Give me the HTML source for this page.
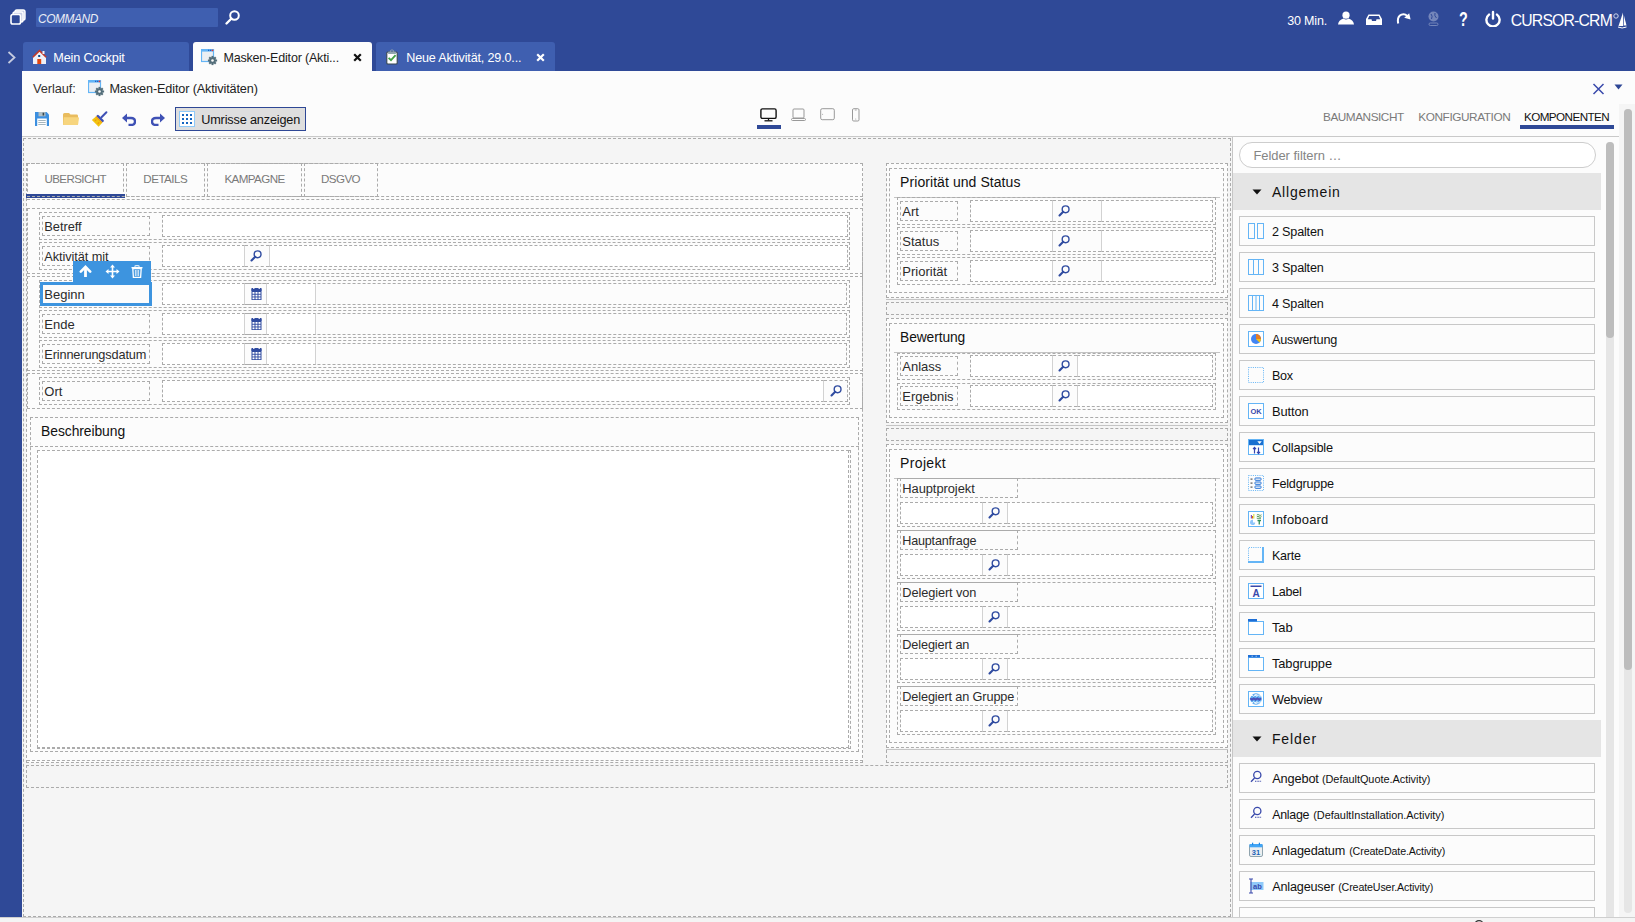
<!DOCTYPE html>
<html><head><meta charset="utf-8"><style>
html,body{margin:0;padding:0;width:1635px;height:922px;overflow:hidden;background:#fcfcfc;font-family:"Liberation Sans", sans-serif;}
.a{position:absolute;box-sizing:border-box;}
.t{white-space:pre;}
</style></head><body>
<div class="a" style="left:0px;top:0px;width:1635px;height:71px;background:#2f4997"></div>
<div class="a" style="left:0px;top:71px;width:22px;height:846px;background:#2f4997"></div>
<div class="a" style="left:22px;top:71px;width:1613px;height:846px;background:#fcfcfc"></div>
<div class="a" style="left:0px;top:917px;width:1635px;height:5px;background:#f4f4f4;border-top:1px solid #cfcfcf"></div>
<svg class="a" style="left:8px;top:7px" width="20" height="20" viewBox="0 0 20 20"><rect x="7" y="3" width="10" height="10" rx="1.8" fill="#c8cee6" stroke="#fff" stroke-width="1.4"/><rect x="5" y="5" width="10" height="10" rx="1.8" fill="#c8cee6" stroke="#fff" stroke-width="1.4"/><rect x="3" y="7.5" width="9.5" height="9.5" rx="1.8" fill="#2f4997" stroke="#fff" stroke-width="1.6"/></svg>
<div class="a" style="left:36px;top:8px;width:182px;height:19px;background:#3f5fb0;border-radius:1px"></div>
<div class="a t" style="left:38px;top:12.00px;font-size:11.92px;line-height:14px;color:#e9ecf5;letter-spacing:-0.416px;font-style:italic;">COMMAND</div>
<svg class="a" style="left:224px;top:9px" width="18" height="18" viewBox="0 0 18 18"><circle cx="10.5" cy="6.5" r="4.3" fill="none" stroke="#fff" stroke-width="2"/><line x1="7.5" y1="9.5" x2="2.5" y2="14.5" stroke="#fff" stroke-width="2.4" stroke-linecap="round"/></svg>
<svg class="a" style="left:6px;top:50px" width="11" height="15" viewBox="0 0 11 15"><polyline points="2.5,2 8.5,7.5 2.5,13" fill="none" stroke="#c5cbe0" stroke-width="1.8"/></svg>
<div class="a" style="left:23px;top:42px;width:166px;height:29px;background:#3f5fb0;border-radius:3px 3px 0 0"></div>
<div class="a" style="left:193px;top:42px;width:179px;height:29px;background:#fcfcfc;border-radius:3px 3px 0 0"></div>
<div class="a" style="left:376px;top:42px;width:179px;height:29px;background:#3f5fb0;border-radius:3px 3px 0 0"></div>
<svg class="a" style="left:32px;top:49px" width="15" height="15" viewBox="0 0 15 15"><rect x="1" y="7" width="13" height="8" fill="#eef0f8"/><polygon points="7.5,1.5 13.5,7.5 1.5,7.5" fill="#eef0f8"/><polyline points="0.8,8.2 7.5,1.6 14.2,8.2" fill="none" stroke="#c0392b" stroke-width="1.6"/><rect x="10.5" y="2" width="2" height="3" fill="#eef0f8"/><rect x="5.3" y="10" width="3.9" height="5" fill="#e2450f"/><rect x="6.2" y="6" width="2" height="2" fill="#0b4a8f"/></svg>
<div class="a t" style="left:53.3px;top:51.00px;font-size:12.68px;line-height:14px;color:#ffffff;letter-spacing:-0.150px;">Mein Cockpit</div>
<svg class="a" style="left:201px;top:49px" width="17" height="17" viewBox="0 0 17 17"><rect x="0.5" y="0.5" width="12" height="12" fill="#eceff3" stroke="#64b5f6" stroke-width="1.2"/><rect x="0" y="0" width="13" height="2.6" fill="#64b5f6"/><rect x="7" y="0.7" width="1.3" height="1.3" fill="#1e63c8"/><rect x="9" y="0.7" width="1.3" height="1.3" fill="#1e63c8"/><circle cx="11.5" cy="1.3" r="0.9" fill="#e53935"/><g transform="translate(11.5,11.5)"><circle r="3.2" fill="#546e7a"/><g fill="#546e7a"><rect x="-1" y="-4.6" width="2" height="9.2"/><rect x="-4.6" y="-1" width="9.2" height="2"/><rect x="-1" y="-4.6" width="2" height="9.2" transform="rotate(45)"/><rect x="-1" y="-4.6" width="2" height="9.2" transform="rotate(-45)"/></g><circle r="1.3" fill="#fcfcfc"/></g></svg>
<div class="a t" style="left:223.4px;top:51.00px;font-size:12.54px;line-height:14px;color:#1d1d1d;letter-spacing:-0.193px;">Masken-Editor (Akti...</div>
<svg class="a" style="left:353px;top:53px" width="9" height="9" viewBox="0 0 9 9"><path d="M1.2,1.2 L7.8,7.8 M7.8,1.2 L1.2,7.8" stroke="#111" stroke-width="2.2"/></svg>
<svg class="a" style="left:386px;top:49px" width="12" height="16" viewBox="0 0 12 16"><rect x="0.8" y="3" width="10.4" height="12" rx="1" fill="#fff" stroke="#37474f" stroke-width="1.1"/><rect x="2" y="2.6" width="8" height="2.4" rx="0.8" fill="#90a4ae"/><rect x="4.5" y="1" width="3" height="2.5" rx="1" fill="none" stroke="#90a4ae" stroke-width="1"/><polyline points="2.6,8.8 5,11.2 9.6,6.2" fill="none" stroke="#43a047" stroke-width="1.8"/></svg>
<div class="a t" style="left:406.3px;top:51.00px;font-size:12.58px;line-height:14px;color:#ffffff;letter-spacing:-0.168px;">Neue Aktivität, 29.0...</div>
<svg class="a" style="left:536px;top:53px" width="9" height="9" viewBox="0 0 9 9"><path d="M1.2,1.2 L7.8,7.8 M7.8,1.2 L1.2,7.8" stroke="#fff" stroke-width="2.2"/></svg>
<div class="a t" style="left:1287.3px;top:14.00px;font-size:12.54px;line-height:14px;color:#ffffff;letter-spacing:-0.206px;">30 Min.</div>
<svg class="a" style="left:1338px;top:11px" width="16" height="14" viewBox="0 0 16 14"><circle cx="8" cy="4.2" r="3.6" fill="#fff"/><path d="M5.5,7.5 Q8,9.5 10.5,7.5 Q15.5,9 16,13.5 L0,13.5 Q0.5,9 5.5,7.5Z" fill="#fff"/></svg>
<svg class="a" style="left:1366px;top:14px" width="16" height="11" viewBox="0 0 16 11"><path d="M2.5,0.5 L13.5,0.5 L16,5 L16,11 L0,11 L0,5 Z" fill="#fff"/><path d="M3.2,2 L12.8,2 L14.2,5.2 L10.5,5.2 L10,7 L6,7 L5.5,5.2 L1.8,5.2 Z" fill="#2e4795"/></svg>
<svg class="a" style="left:1396px;top:11px" width="16" height="14" viewBox="0 0 16 14"><path d="M2.2,12.5 Q0.8,5.5 5.5,3.6 Q8.8,2.4 11.2,5" fill="none" stroke="#fff" stroke-width="2"/><polygon points="8.2,6.8 14.6,8.6 13.2,2.2" fill="#fff"/></svg>
<svg class="a" style="left:1427px;top:11px" width="13" height="15" viewBox="0 0 13 15"><g opacity="0.45"><circle cx="6.5" cy="5.5" r="5" fill="#c9d0e6"/><path d="M4,3 Q6,5 4.5,8 M8,2 Q7,5 9.5,7" stroke="#2e4795" stroke-width="1" fill="none"/><rect x="2" y="12" width="9" height="2.5" rx="1.2" fill="none" stroke="#c9d0e6" stroke-width="1"/></g></svg>
<div class="a t" style="left:1458.5px;top:7.00px;font-size:21.00px;line-height:23px;color:#ffffff;letter-spacing:0.000px;font-weight:700;transform:scaleX(0.68);transform-origin:0 0;">?</div>
<svg class="a" style="left:1484px;top:10px" width="18" height="17" viewBox="0 0 18 17"><path d="M5,4.6 A6.6,6.6 0 1 0 13,4.6" fill="none" stroke="#fff" stroke-width="2.4" stroke-linecap="round"/><line x1="9" y1="2" x2="9" y2="8.5" stroke="#fff" stroke-width="2.4" stroke-linecap="round"/></svg>
<div class="a t" style="left:1510.7px;top:12.00px;font-size:15.75px;line-height:17px;color:#ffffff;letter-spacing:-0.805px;">CURSOR-CRM</div>
<svg class="a" style="left:1613px;top:13px" width="6" height="6" viewBox="0 0 6 6"><circle cx="3" cy="3" r="2.2" fill="none" stroke="#cfd6ea" stroke-width="1"/></svg>
<svg class="a" style="left:1618px;top:12px" width="9" height="17" viewBox="0 0 9 17"><path d="M5,0.5 L5.2,14 L0.5,14 Z" fill="#fff"/><path d="M5.8,3 L8.5,13.5 L5.8,13.5 Z" fill="#fff"/><path d="M0,15 Q4,17 8.5,15" stroke="#fff" stroke-width="1" fill="none"/></svg>
<div class="a t" style="left:33px;top:81.00px;font-size:12.81px;line-height:15px;color:#333;letter-spacing:-0.080px;">Verlauf:</div>
<svg class="a" style="left:88px;top:80px" width="17" height="17" viewBox="0 0 17 17"><rect x="0.5" y="0.5" width="12" height="12" fill="#eceff3" stroke="#64b5f6" stroke-width="1.2"/><rect x="0" y="0" width="13" height="2.6" fill="#64b5f6"/><rect x="7" y="0.7" width="1.3" height="1.3" fill="#1e63c8"/><rect x="9" y="0.7" width="1.3" height="1.3" fill="#1e63c8"/><circle cx="11.5" cy="1.3" r="0.9" fill="#e53935"/><g transform="translate(11.5,11.5)"><circle r="3.2" fill="#546e7a"/><g fill="#546e7a"><rect x="-1" y="-4.6" width="2" height="9.2"/><rect x="-4.6" y="-1" width="9.2" height="2"/><rect x="-1" y="-4.6" width="2" height="9.2" transform="rotate(45)"/><rect x="-1" y="-4.6" width="2" height="9.2" transform="rotate(-45)"/></g><circle r="1.3" fill="#fcfcfc"/></g></svg>
<div class="a t" style="left:109.4px;top:82.00px;font-size:12.68px;line-height:14px;color:#222;letter-spacing:-0.140px;">Masken-Editor (Aktivitäten)</div>
<svg class="a" style="left:1592px;top:83px" width="13" height="12" viewBox="0 0 13 12"><path d="M1.5,1 L11.5,11 M11.5,1 L1.5,11" stroke="#3949ab" stroke-width="1.5"/></svg>
<svg class="a" style="left:1614px;top:84px" width="9" height="6" viewBox="0 0 9 6"><polygon points="0.5,0.5 8.5,0.5 4.5,5.5" fill="#2e4795"/></svg>
<svg class="a" style="left:35px;top:112px" width="14" height="14" viewBox="0 0 14 14"><path d="M0,0 L11.5,0 L14,2.5 L14,14 L0,14Z" fill="#3b8fe0"/><rect x="3.5" y="0" width="7" height="4.3" fill="#b0bec5"/><rect x="7.6" y="0.7" width="1.6" height="2.8" fill="#37474f"/><rect x="2.2" y="6.5" width="9.6" height="7.5" fill="#fff"/><rect x="3.3" y="8" width="7.4" height="0.8" fill="#90a4ae"/><rect x="3.3" y="10" width="7.4" height="0.8" fill="#90a4ae"/><rect x="3.3" y="12" width="7.4" height="0.8" fill="#90a4ae"/></svg>
<svg class="a" style="left:63px;top:113px" width="17" height="12" viewBox="0 0 17 12"><path d="M0,1.5 Q0,0 1.5,0 L6,0 L7.5,1.5 L14,1.5 Q15,1.5 15,3 L15,11 Q15,12 14,12 L1,12 Q0,12 0,11Z" fill="#e9bc5e"/><path d="M0.8,4.3 L15.2,4.3 Q16,4.3 16,5 L15.2,11 Q15,12 14,12 L1,12 Q0.2,12 0.2,11 Z" fill="#f7d57e"/></svg>
<svg class="a" style="left:88px;top:108px" width="24" height="22" viewBox="0 0 24 22"><g transform="translate(12.2,10.5) rotate(45)"><rect x="-1" y="-9.8" width="2" height="9" rx="1" fill="#3f51b5"/><rect x="-4.6" y="-1.3" width="9.2" height="2.6" rx="1.2" fill="#3f51b5"/><path d="M-4.4,1.2 L4.4,1.2 L4.8,7 L-4.8,7 Z" fill="#f2c40f"/><rect x="-4.4" y="1.2" width="8.8" height="0.9" fill="#f0900f"/><rect x="-2.5" y="3.5" width="1" height="2" fill="#f0900f"/><rect x="1.5" y="3.5" width="1" height="2" fill="#f0900f"/></g></svg>
<svg class="a" style="left:122px;top:113px" width="14" height="13" viewBox="0 0 14 13"><path d="M4,5 L9,5 Q13,5 13,8.5 Q13,12 9,12 L6.5,12" fill="none" stroke="#3f51b5" stroke-width="2.4"/><polygon points="0,5 5,0.5 5,9.5" fill="#3f51b5"/></svg>
<svg class="a" style="left:151px;top:113px" width="14" height="13" viewBox="0 0 14 13"><g transform="translate(14,0) scale(-1,1)"><path d="M4,5 L9,5 Q13,5 13,8.5 Q13,12 9,12 L6.5,12" fill="none" stroke="#3f51b5" stroke-width="2.4"/><polygon points="0,5 5,0.5 5,9.5" fill="#3f51b5"/></g></svg>
<div class="a" style="left:175px;top:107px;width:131px;height:24px;background:#dedede;border:1px solid #2e4795"></div>
<svg class="a" style="left:179px;top:111px" width="16" height="16" viewBox="0 0 16 16"><rect x="0.5" y="0.5" width="15" height="15" fill="#fff" stroke="#90caf9" stroke-width="1"/><rect x="3" y="3" width="2" height="2" fill="#1565c0"/><rect x="3" y="7" width="2" height="2" fill="#1565c0"/><rect x="3" y="11" width="2" height="2" fill="#1565c0"/><rect x="7" y="3" width="2" height="2" fill="#1565c0"/><rect x="7" y="7" width="2" height="2" fill="#1565c0"/><rect x="7" y="11" width="2" height="2" fill="#1565c0"/><rect x="11" y="3" width="2" height="2" fill="#1565c0"/><rect x="11" y="7" width="2" height="2" fill="#1565c0"/><rect x="11" y="11" width="2" height="2" fill="#1565c0"/></svg>
<div class="a t" style="left:201.2px;top:113.00px;font-size:12.68px;line-height:14px;color:#111;letter-spacing:-0.156px;">Umrisse anzeigen</div>
<svg class="a" style="left:760px;top:108px" width="17" height="14" viewBox="0 0 17 14"><rect x="0.9" y="0.9" width="15.2" height="9.5" rx="1.5" fill="none" stroke="#111" stroke-width="1.4"/><line x1="8.5" y1="10.5" x2="8.5" y2="12.5" stroke="#111" stroke-width="1.3"/><line x1="4.5" y1="12.8" x2="12.5" y2="12.8" stroke="#111" stroke-width="1.3"/></svg>
<div class="a" style="left:757px;top:125px;width:24px;height:4px;background:#2f4997"></div>
<svg class="a" style="left:791px;top:108px" width="15" height="14" viewBox="0 0 15 14"><rect x="2" y="1" width="11" height="9" rx="1" fill="none" stroke="#999" stroke-width="1"/><rect x="0.5" y="10.5" width="14" height="2" rx="1" fill="none" stroke="#999" stroke-width="1"/></svg>
<svg class="a" style="left:820px;top:108px" width="15" height="13" viewBox="0 0 15 13"><rect x="0.7" y="0.7" width="13.6" height="11" rx="1.5" fill="none" stroke="#999" stroke-width="1"/><circle cx="2.6" cy="6.2" r="0.5" fill="#999"/></svg>
<svg class="a" style="left:851px;top:108px" width="9" height="14" viewBox="0 0 9 14"><rect x="1.5" y="0.7" width="6.5" height="12.3" rx="1.2" fill="none" stroke="#999" stroke-width="1"/><circle cx="4.75" cy="11" r="0.5" fill="#999"/><line x1="3.8" y1="2" x2="5.7" y2="2" stroke="#999" stroke-width="0.8"/></svg>
<div class="a t" style="left:1323px;top:110.00px;font-size:11.78px;line-height:13px;color:#7a7a7a;letter-spacing:-0.449px;">BAUMANSICHT</div>
<div class="a t" style="left:1418.3px;top:110.00px;font-size:11.81px;line-height:14px;color:#7a7a7a;letter-spacing:-0.417px;">KONFIGURATION</div>
<div class="a t" style="left:1524px;top:110.00px;font-size:11.66px;line-height:13px;color:#111;letter-spacing:-0.559px;">KOMPONENTEN</div>
<div class="a" style="left:1520px;top:125px;width:94px;height:4px;background:#2f4997"></div>
<div class="a" style="left:22px;top:136px;width:1597px;height:1px;background:#c9c9c9"></div>
<div class="a" style="left:22px;top:137px;width:1210px;height:780px;background:#f5f5f5"></div>
<div class="a" style="left:23px;top:138px;width:1208px;height:779px;border:1px dashed #ababab;"></div>
<div class="a" style="left:26px;top:163px;width:837px;height:600px;border:1px dashed #ababab;background:#fcfcfc"></div>
<div class="a" style="left:27px;top:163px;width:97px;height:34px;border:1px dashed #ababab;"></div>
<div class="a t" style="left:44.5px;top:173.00px;font-size:11.53px;line-height:12px;color:#7a7a7a;letter-spacing:-0.572px;">UBERSICHT</div>
<div class="a" style="left:126px;top:163px;width:79px;height:34px;border:1px dashed #ababab;"></div>
<div class="a t" style="left:143.3px;top:173.00px;font-size:11.58px;line-height:12px;color:#7a7a7a;letter-spacing:-0.500px;">DETAILS</div>
<div class="a" style="left:207px;top:163px;width:95px;height:34px;border:1px dashed #ababab;"></div>
<div class="a t" style="left:224.4px;top:172.00px;font-size:11.61px;line-height:13px;color:#7a7a7a;letter-spacing:-0.579px;">KAMPAGNE</div>
<div class="a" style="left:304px;top:163px;width:74px;height:34px;border:1px dashed #ababab;"></div>
<div class="a t" style="left:321px;top:172.00px;font-size:11.62px;line-height:13px;color:#7a7a7a;letter-spacing:-0.593px;">DSGVO</div>
<div class="a" style="left:26px;top:194px;width:99px;height:4px;background:#2f4997"></div>
<div class="a" style="left:27px;top:196px;width:836px;height:1px;border-top:1px dashed #ababab"></div>
<div class="a" style="left:27px;top:199px;width:836px;height:1px;border-top:1px dashed #ababab"></div>
<div class="a" style="left:27px;top:208px;width:836px;height:66px;border:1px dashed #ababab;"></div>
<div class="a" style="left:27px;top:276px;width:836px;height:95px;border:1px dashed #ababab;"></div>
<div class="a" style="left:27px;top:373px;width:836px;height:36px;border:1px dashed #ababab;"></div>
<div class="a" style="left:39px;top:212px;width:811px;height:28px;border:1px dashed #ababab;"></div>
<div class="a" style="left:42px;top:216px;width:108px;height:20px;border:1px dashed #ababab;"></div>
<div class="a t" style="left:44.3px;top:219.00px;font-size:12.87px;line-height:15px;color:#2b2b2b;letter-spacing:-0.054px;">Betreff</div>
<div class="a" style="left:162px;top:215px;width:686px;height:22px;background:#fff;border:1px dashed #ababab;"></div>
<div class="a" style="left:39px;top:242px;width:811px;height:28px;border:1px dashed #ababab;"></div>
<div class="a" style="left:42px;top:246px;width:108px;height:20px;border:1px dashed #ababab;"></div>
<div class="a t" style="left:44.3px;top:249.00px;font-size:12.78px;line-height:15px;color:#2b2b2b;letter-spacing:-0.087px;">Aktivität mit</div>
<div class="a" style="left:162px;top:245px;width:83px;height:22px;background:#fff;border:1px dashed #ababab;border-right:1px solid #d2d2d2;"></div>
<div class="a" style="left:245px;top:245px;width:24px;height:22px;border-top:1px dashed #ababab;border-bottom:1px dashed #ababab;"></div>
<svg class="a" style="left:250px;top:250px" width="12" height="12" viewBox="0 0 12 12"><circle cx="7.6" cy="4.3" r="3.4" fill="none" stroke="#2f4ba0" stroke-width="1.4"/><line x1="5.2" y1="6.8" x2="1.5" y2="10.5" stroke="#2f4ba0" stroke-width="2.1" stroke-linecap="round"/></svg>
<div class="a" style="left:269px;top:245px;width:579px;height:22px;background:#fff;border:1px dashed #ababab;border-left:1px solid #d2d2d2;"></div>
<div class="a" style="left:39px;top:280px;width:811px;height:28px;border:1px dashed #ababab;"></div>
<div class="a" style="left:40px;top:282px;width:112px;height:24px;border:3px solid #3d94df;background:#fcfcfc"></div>
<div class="a t" style="left:44.3px;top:287.00px;font-size:13.00px;line-height:15px;color:#2b2b2b;letter-spacing:0.000px;">Beginn</div>
<div class="a" style="left:162px;top:283px;width:685px;height:22px;border:1px dashed #ababab;"></div>
<div class="a" style="left:162px;top:283px;width:83px;height:22px;background:#fff;border:1px dashed #ababab;border-right:1px solid #d2d2d2;"></div>
<div class="a" style="left:245px;top:283px;width:21px;height:22px;border-top:1px dashed #ababab;border-bottom:1px dashed #ababab;"></div>
<svg class="a" style="left:251px;top:287px" width="11" height="14" viewBox="0 0 11 14"><rect x="0.5" y="2" width="10" height="11" fill="#2f4ba0"/><rect x="0.5" y="1" width="10" height="3" fill="#2f4ba0"/><rect x="1.5" y="5.0" width="2" height="1.8" fill="#fff"/><rect x="1.5" y="7.7" width="2" height="1.8" fill="#fff"/><rect x="1.5" y="10.4" width="2" height="1.8" fill="#fff"/><rect x="4.5" y="5.0" width="2" height="1.8" fill="#fff"/><rect x="4.5" y="7.7" width="2" height="1.8" fill="#fff"/><rect x="4.5" y="10.4" width="2" height="1.8" fill="#fff"/><rect x="7.5" y="5.0" width="2" height="1.8" fill="#fff"/><rect x="7.5" y="7.7" width="2" height="1.8" fill="#fff"/><rect x="7.5" y="10.4" width="2" height="1.8" fill="#fff"/><rect x="2.2" y="0" width="1.2" height="2" fill="#fff"/><rect x="7.6" y="0" width="1.2" height="2" fill="#fff"/></svg>
<div class="a" style="left:266px;top:283px;width:50px;height:22px;background:#fff;border:1px dashed #ababab;border-right:1px solid #d2d2d2;border-left:1px solid #d2d2d2;"></div>
<div class="a" style="left:39px;top:310px;width:811px;height:28px;border:1px dashed #ababab;"></div>
<div class="a" style="left:42px;top:314px;width:108px;height:20px;border:1px dashed #ababab;"></div>
<div class="a t" style="left:44.3px;top:317.00px;font-size:13.00px;line-height:15px;color:#2b2b2b;letter-spacing:0.000px;">Ende</div>
<div class="a" style="left:162px;top:313px;width:685px;height:22px;border:1px dashed #ababab;"></div>
<div class="a" style="left:162px;top:313px;width:83px;height:22px;background:#fff;border:1px dashed #ababab;border-right:1px solid #d2d2d2;"></div>
<div class="a" style="left:245px;top:313px;width:21px;height:22px;border-top:1px dashed #ababab;border-bottom:1px dashed #ababab;"></div>
<svg class="a" style="left:251px;top:317px" width="11" height="14" viewBox="0 0 11 14"><rect x="0.5" y="2" width="10" height="11" fill="#2f4ba0"/><rect x="0.5" y="1" width="10" height="3" fill="#2f4ba0"/><rect x="1.5" y="5.0" width="2" height="1.8" fill="#fff"/><rect x="1.5" y="7.7" width="2" height="1.8" fill="#fff"/><rect x="1.5" y="10.4" width="2" height="1.8" fill="#fff"/><rect x="4.5" y="5.0" width="2" height="1.8" fill="#fff"/><rect x="4.5" y="7.7" width="2" height="1.8" fill="#fff"/><rect x="4.5" y="10.4" width="2" height="1.8" fill="#fff"/><rect x="7.5" y="5.0" width="2" height="1.8" fill="#fff"/><rect x="7.5" y="7.7" width="2" height="1.8" fill="#fff"/><rect x="7.5" y="10.4" width="2" height="1.8" fill="#fff"/><rect x="2.2" y="0" width="1.2" height="2" fill="#fff"/><rect x="7.6" y="0" width="1.2" height="2" fill="#fff"/></svg>
<div class="a" style="left:266px;top:313px;width:50px;height:22px;background:#fff;border:1px dashed #ababab;border-right:1px solid #d2d2d2;border-left:1px solid #d2d2d2;"></div>
<div class="a" style="left:39px;top:340px;width:811px;height:28px;border:1px dashed #ababab;"></div>
<div class="a" style="left:42px;top:344px;width:108px;height:20px;border:1px dashed #ababab;"></div>
<div class="a t" style="left:44.3px;top:347.00px;font-size:12.74px;line-height:15px;color:#2b2b2b;letter-spacing:-0.131px;">Erinnerungsdatum</div>
<div class="a" style="left:162px;top:343px;width:685px;height:22px;border:1px dashed #ababab;"></div>
<div class="a" style="left:162px;top:343px;width:83px;height:22px;background:#fff;border:1px dashed #ababab;border-right:1px solid #d2d2d2;"></div>
<div class="a" style="left:245px;top:343px;width:21px;height:22px;border-top:1px dashed #ababab;border-bottom:1px dashed #ababab;"></div>
<svg class="a" style="left:251px;top:347px" width="11" height="14" viewBox="0 0 11 14"><rect x="0.5" y="2" width="10" height="11" fill="#2f4ba0"/><rect x="0.5" y="1" width="10" height="3" fill="#2f4ba0"/><rect x="1.5" y="5.0" width="2" height="1.8" fill="#fff"/><rect x="1.5" y="7.7" width="2" height="1.8" fill="#fff"/><rect x="1.5" y="10.4" width="2" height="1.8" fill="#fff"/><rect x="4.5" y="5.0" width="2" height="1.8" fill="#fff"/><rect x="4.5" y="7.7" width="2" height="1.8" fill="#fff"/><rect x="4.5" y="10.4" width="2" height="1.8" fill="#fff"/><rect x="7.5" y="5.0" width="2" height="1.8" fill="#fff"/><rect x="7.5" y="7.7" width="2" height="1.8" fill="#fff"/><rect x="7.5" y="10.4" width="2" height="1.8" fill="#fff"/><rect x="2.2" y="0" width="1.2" height="2" fill="#fff"/><rect x="7.6" y="0" width="1.2" height="2" fill="#fff"/></svg>
<div class="a" style="left:266px;top:343px;width:50px;height:22px;background:#fff;border:1px dashed #ababab;border-right:1px solid #d2d2d2;border-left:1px solid #d2d2d2;"></div>
<div class="a" style="left:39px;top:377px;width:811px;height:28px;border:1px dashed #ababab;"></div>
<div class="a" style="left:42px;top:381px;width:108px;height:20px;border:1px dashed #ababab;"></div>
<div class="a t" style="left:44.3px;top:384.00px;font-size:13.00px;line-height:15px;color:#2b2b2b;letter-spacing:0.000px;">Ort</div>
<div class="a" style="left:162px;top:380px;width:662px;height:22px;background:#fff;border:1px dashed #ababab;border-right:1px solid #d2d2d2;"></div>
<div class="a" style="left:824px;top:380px;width:24px;height:22px;border:1px dashed #ababab;border-left:none"></div>
<svg class="a" style="left:830px;top:385px" width="12" height="12" viewBox="0 0 12 12"><circle cx="7.6" cy="4.3" r="3.4" fill="none" stroke="#2f4ba0" stroke-width="1.4"/><line x1="5.2" y1="6.8" x2="1.5" y2="10.5" stroke="#2f4ba0" stroke-width="2.1" stroke-linecap="round"/></svg>
<div class="a" style="left:73px;top:261px;width:78px;height:22px;background:#3d94df"></div>
<svg class="a" style="left:79px;top:265px" width="13" height="13" viewBox="0 0 13 13"><polyline points="1.8,6.6 6.5,1.9 11.2,6.6" fill="none" stroke="#fff" stroke-width="2.6" stroke-linecap="round"/><line x1="6.5" y1="3" x2="6.5" y2="12" stroke="#fff" stroke-width="2.8"/></svg>
<svg class="a" style="left:105px;top:264px" width="15" height="15" viewBox="0 0 15 15"><path d="M7.5,0.5 L10,3.5 L8.3,3.5 L8.3,6.7 L11.5,6.7 L11.5,5 L14.5,7.5 L11.5,10 L11.5,8.3 L8.3,8.3 L8.3,11.5 L10,11.5 L7.5,14.5 L5,11.5 L6.7,11.5 L6.7,8.3 L3.5,8.3 L3.5,10 L0.5,7.5 L3.5,5 L3.5,6.7 L6.7,6.7 L6.7,3.5 L5,3.5 Z" fill="#fff"/></svg>
<svg class="a" style="left:131px;top:265px" width="12" height="13" viewBox="0 0 12 13"><rect x="0.5" y="2" width="11" height="1.4" fill="#fff"/><rect x="4" y="0.3" width="4" height="2" rx="0.6" fill="none" stroke="#fff" stroke-width="1"/><path d="M1.8,3.6 L10.2,3.6 L9.6,12.5 L2.4,12.5 Z" fill="none" stroke="#fff" stroke-width="1.3"/><path d="M4.4,5 L4.4,11 M6,5 L6,11 M7.6,5 L7.6,11" stroke="#fff" stroke-width="0.8"/></svg>
<div class="a" style="left:30px;top:417px;width:829px;height:335px;border:1px dashed #ababab;"></div>
<div class="a t" style="left:41.1px;top:423.00px;font-size:13.87px;line-height:16px;color:#111;letter-spacing:-0.067px;">Beschreibung</div>
<div class="a" style="left:30px;top:446px;width:829px;height:1px;border-top:1px dashed #ababab"></div>
<div class="a" style="left:37px;top:450px;width:814px;height:299px;border:1px dashed #ababab;"></div>
<div class="a" style="left:37px;top:450px;width:812px;height:298px;background:#fff;border:1px dashed #ababab"></div>
<div class="a" style="left:27px;top:760px;width:836px;height:1px;border-top:1px dashed #ababab"></div>
<div class="a" style="left:886px;top:163px;width:342px;height:135px;border:1px dashed #ababab;background:#fcfcfc"></div>
<div class="a" style="left:889px;top:168px;width:335px;height:125px;border:1px dashed #ababab;"></div>
<div class="a t" style="left:900.1px;top:174.00px;font-size:14.00px;line-height:16px;color:#111;letter-spacing:0.067px;">Priorität und Status</div>
<div class="a" style="left:894px;top:197px;width:326px;height:1px;background:#c4c4c4"></div>
<div class="a" style="left:897px;top:197px;width:319px;height:28px;border:1px dashed #ababab;"></div>
<div class="a" style="left:900px;top:201px;width:58px;height:20px;border:1px dashed #ababab;"></div>
<div class="a t" style="left:902.3px;top:204.00px;font-size:13.00px;line-height:15px;color:#2b2b2b;letter-spacing:0.000px;">Art</div>
<div class="a" style="left:970px;top:200px;width:83px;height:22px;background:#fff;border:1px dashed #ababab;border-right:1px solid #d2d2d2;"></div>
<div class="a" style="left:1053px;top:200px;width:48px;height:22px;border-top:1px dashed #ababab;border-bottom:1px dashed #ababab;"></div>
<svg class="a" style="left:1058px;top:205px" width="12" height="12" viewBox="0 0 12 12"><circle cx="7.6" cy="4.3" r="3.4" fill="none" stroke="#2f4ba0" stroke-width="1.4"/><line x1="5.2" y1="6.8" x2="1.5" y2="10.5" stroke="#2f4ba0" stroke-width="2.1" stroke-linecap="round"/></svg>
<div class="a" style="left:1101px;top:200px;width:112px;height:22px;background:#fff;border:1px dashed #ababab;border-left:1px solid #d2d2d2;"></div>
<div class="a" style="left:897px;top:227px;width:319px;height:28px;border:1px dashed #ababab;"></div>
<div class="a" style="left:900px;top:231px;width:58px;height:20px;border:1px dashed #ababab;"></div>
<div class="a t" style="left:902.3px;top:234.00px;font-size:13.00px;line-height:15px;color:#2b2b2b;letter-spacing:0.000px;">Status</div>
<div class="a" style="left:970px;top:230px;width:83px;height:22px;background:#fff;border:1px dashed #ababab;border-right:1px solid #d2d2d2;"></div>
<div class="a" style="left:1053px;top:230px;width:48px;height:22px;border-top:1px dashed #ababab;border-bottom:1px dashed #ababab;"></div>
<svg class="a" style="left:1058px;top:235px" width="12" height="12" viewBox="0 0 12 12"><circle cx="7.6" cy="4.3" r="3.4" fill="none" stroke="#2f4ba0" stroke-width="1.4"/><line x1="5.2" y1="6.8" x2="1.5" y2="10.5" stroke="#2f4ba0" stroke-width="2.1" stroke-linecap="round"/></svg>
<div class="a" style="left:1101px;top:230px;width:112px;height:22px;background:#fff;border:1px dashed #ababab;border-left:1px solid #d2d2d2;"></div>
<div class="a" style="left:897px;top:257px;width:319px;height:28px;border:1px dashed #ababab;"></div>
<div class="a" style="left:900px;top:261px;width:58px;height:20px;border:1px dashed #ababab;"></div>
<div class="a t" style="left:902.3px;top:264.00px;font-size:13.00px;line-height:15px;color:#2b2b2b;letter-spacing:0.000px;">Priorität</div>
<div class="a" style="left:970px;top:260px;width:83px;height:22px;background:#fff;border:1px dashed #ababab;border-right:1px solid #d2d2d2;"></div>
<div class="a" style="left:1053px;top:260px;width:48px;height:22px;border-top:1px dashed #ababab;border-bottom:1px dashed #ababab;"></div>
<svg class="a" style="left:1058px;top:265px" width="12" height="12" viewBox="0 0 12 12"><circle cx="7.6" cy="4.3" r="3.4" fill="none" stroke="#2f4ba0" stroke-width="1.4"/><line x1="5.2" y1="6.8" x2="1.5" y2="10.5" stroke="#2f4ba0" stroke-width="2.1" stroke-linecap="round"/></svg>
<div class="a" style="left:1101px;top:260px;width:112px;height:22px;background:#fff;border:1px dashed #ababab;border-left:1px solid #d2d2d2;"></div>
<div class="a" style="left:886px;top:299px;width:342px;height:1px;background:#c4c4c4"></div>
<div class="a" style="left:886px;top:302px;width:342px;height:13px;border:1px dashed #ababab;background:#f5f5f5"></div>
<div class="a" style="left:886px;top:318px;width:342px;height:105px;border:1px dashed #ababab;background:#fcfcfc"></div>
<div class="a" style="left:889px;top:323px;width:335px;height:95px;border:1px dashed #ababab;"></div>
<div class="a t" style="left:900.1px;top:330.00px;font-size:13.80px;line-height:15px;color:#111;letter-spacing:-0.107px;">Bewertung</div>
<div class="a" style="left:894px;top:352px;width:326px;height:1px;background:#c4c4c4"></div>
<div class="a" style="left:897px;top:353px;width:319px;height:27px;border:1px dashed #ababab;"></div>
<div class="a" style="left:900px;top:356px;width:58px;height:20px;border:1px dashed #ababab;"></div>
<div class="a t" style="left:902.3px;top:359.00px;font-size:13.00px;line-height:15px;color:#2b2b2b;letter-spacing:0.000px;">Anlass</div>
<div class="a" style="left:970px;top:355px;width:83px;height:22px;background:#fff;border:1px dashed #ababab;border-right:1px solid #d2d2d2;"></div>
<div class="a" style="left:1053px;top:355px;width:24px;height:22px;border-top:1px dashed #ababab;border-bottom:1px dashed #ababab;"></div>
<svg class="a" style="left:1058px;top:360px" width="12" height="12" viewBox="0 0 12 12"><circle cx="7.6" cy="4.3" r="3.4" fill="none" stroke="#2f4ba0" stroke-width="1.4"/><line x1="5.2" y1="6.8" x2="1.5" y2="10.5" stroke="#2f4ba0" stroke-width="2.1" stroke-linecap="round"/></svg>
<div class="a" style="left:1077px;top:355px;width:136px;height:22px;background:#fff;border:1px dashed #ababab;border-left:1px solid #d2d2d2;"></div>
<div class="a" style="left:897px;top:383px;width:319px;height:27px;border:1px dashed #ababab;"></div>
<div class="a" style="left:900px;top:386px;width:58px;height:20px;border:1px dashed #ababab;"></div>
<div class="a t" style="left:902.3px;top:389.00px;font-size:13.00px;line-height:15px;color:#2b2b2b;letter-spacing:0.000px;">Ergebnis</div>
<div class="a" style="left:970px;top:385px;width:83px;height:22px;background:#fff;border:1px dashed #ababab;border-right:1px solid #d2d2d2;"></div>
<div class="a" style="left:1053px;top:385px;width:24px;height:22px;border-top:1px dashed #ababab;border-bottom:1px dashed #ababab;"></div>
<svg class="a" style="left:1058px;top:390px" width="12" height="12" viewBox="0 0 12 12"><circle cx="7.6" cy="4.3" r="3.4" fill="none" stroke="#2f4ba0" stroke-width="1.4"/><line x1="5.2" y1="6.8" x2="1.5" y2="10.5" stroke="#2f4ba0" stroke-width="2.1" stroke-linecap="round"/></svg>
<div class="a" style="left:1077px;top:385px;width:136px;height:22px;background:#fff;border:1px dashed #ababab;border-left:1px solid #d2d2d2;"></div>
<div class="a" style="left:886px;top:425px;width:342px;height:1px;background:#c4c4c4"></div>
<div class="a" style="left:886px;top:428px;width:342px;height:13px;border:1px dashed #ababab;background:#f5f5f5"></div>
<div class="a" style="left:886px;top:444px;width:342px;height:304px;border:1px dashed #ababab;background:#fcfcfc"></div>
<div class="a" style="left:889px;top:449px;width:335px;height:294px;border:1px dashed #ababab;"></div>
<div class="a t" style="left:900.1px;top:455.00px;font-size:14.00px;line-height:16px;color:#111;letter-spacing:0.346px;">Projekt</div>
<div class="a" style="left:894px;top:478px;width:326px;height:1px;background:#c4c4c4"></div>
<div class="a" style="left:897px;top:478px;width:319px;height:49px;border:1px dashed #ababab;"></div>
<div class="a" style="left:900px;top:478px;width:118px;height:20px;border:1px dashed #ababab;"></div>
<div class="a t" style="left:902.3px;top:481.00px;font-size:12.89px;line-height:15px;color:#2b2b2b;letter-spacing:-0.051px;">Hauptprojekt</div>
<div class="a" style="left:900px;top:502px;width:83px;height:22px;background:#fff;border:1px dashed #ababab;border-right:1px solid #d2d2d2;"></div>
<div class="a" style="left:983px;top:502px;width:24px;height:22px;border-top:1px dashed #ababab;border-bottom:1px dashed #ababab;"></div>
<svg class="a" style="left:988px;top:507px" width="12" height="12" viewBox="0 0 12 12"><circle cx="7.6" cy="4.3" r="3.4" fill="none" stroke="#2f4ba0" stroke-width="1.4"/><line x1="5.2" y1="6.8" x2="1.5" y2="10.5" stroke="#2f4ba0" stroke-width="2.1" stroke-linecap="round"/></svg>
<div class="a" style="left:1007px;top:502px;width:206px;height:22px;background:#fff;border:1px dashed #ababab;border-left:1px solid #d2d2d2;"></div>
<div class="a" style="left:897px;top:530px;width:319px;height:49px;border:1px dashed #ababab;"></div>
<div class="a" style="left:900px;top:530px;width:118px;height:20px;border:1px dashed #ababab;"></div>
<div class="a t" style="left:902.3px;top:534.00px;font-size:12.60px;line-height:14px;color:#2b2b2b;letter-spacing:-0.196px;">Hauptanfrage</div>
<div class="a" style="left:900px;top:554px;width:83px;height:22px;background:#fff;border:1px dashed #ababab;border-right:1px solid #d2d2d2;"></div>
<div class="a" style="left:983px;top:554px;width:24px;height:22px;border-top:1px dashed #ababab;border-bottom:1px dashed #ababab;"></div>
<svg class="a" style="left:988px;top:559px" width="12" height="12" viewBox="0 0 12 12"><circle cx="7.6" cy="4.3" r="3.4" fill="none" stroke="#2f4ba0" stroke-width="1.4"/><line x1="5.2" y1="6.8" x2="1.5" y2="10.5" stroke="#2f4ba0" stroke-width="2.1" stroke-linecap="round"/></svg>
<div class="a" style="left:1007px;top:554px;width:206px;height:22px;background:#fff;border:1px dashed #ababab;border-left:1px solid #d2d2d2;"></div>
<div class="a" style="left:897px;top:582px;width:319px;height:49px;border:1px dashed #ababab;"></div>
<div class="a" style="left:900px;top:582px;width:118px;height:20px;border:1px dashed #ababab;"></div>
<div class="a t" style="left:902.3px;top:585.00px;font-size:12.78px;line-height:15px;color:#2b2b2b;letter-spacing:-0.099px;">Delegiert von</div>
<div class="a" style="left:900px;top:606px;width:83px;height:22px;background:#fff;border:1px dashed #ababab;border-right:1px solid #d2d2d2;"></div>
<div class="a" style="left:983px;top:606px;width:24px;height:22px;border-top:1px dashed #ababab;border-bottom:1px dashed #ababab;"></div>
<svg class="a" style="left:988px;top:611px" width="12" height="12" viewBox="0 0 12 12"><circle cx="7.6" cy="4.3" r="3.4" fill="none" stroke="#2f4ba0" stroke-width="1.4"/><line x1="5.2" y1="6.8" x2="1.5" y2="10.5" stroke="#2f4ba0" stroke-width="2.1" stroke-linecap="round"/></svg>
<div class="a" style="left:1007px;top:606px;width:206px;height:22px;background:#fff;border:1px dashed #ababab;border-left:1px solid #d2d2d2;"></div>
<div class="a" style="left:897px;top:634px;width:319px;height:49px;border:1px dashed #ababab;"></div>
<div class="a" style="left:900px;top:634px;width:118px;height:20px;border:1px dashed #ababab;"></div>
<div class="a t" style="left:902.3px;top:637.00px;font-size:12.71px;line-height:15px;color:#2b2b2b;letter-spacing:-0.128px;">Delegiert an</div>
<div class="a" style="left:900px;top:658px;width:83px;height:22px;background:#fff;border:1px dashed #ababab;border-right:1px solid #d2d2d2;"></div>
<div class="a" style="left:983px;top:658px;width:24px;height:22px;border-top:1px dashed #ababab;border-bottom:1px dashed #ababab;"></div>
<svg class="a" style="left:988px;top:663px" width="12" height="12" viewBox="0 0 12 12"><circle cx="7.6" cy="4.3" r="3.4" fill="none" stroke="#2f4ba0" stroke-width="1.4"/><line x1="5.2" y1="6.8" x2="1.5" y2="10.5" stroke="#2f4ba0" stroke-width="2.1" stroke-linecap="round"/></svg>
<div class="a" style="left:1007px;top:658px;width:206px;height:22px;background:#fff;border:1px dashed #ababab;border-left:1px solid #d2d2d2;"></div>
<div class="a" style="left:897px;top:686px;width:319px;height:49px;border:1px dashed #ababab;"></div>
<div class="a" style="left:900px;top:686px;width:118px;height:20px;border:1px dashed #ababab;"></div>
<div class="a t" style="left:902.3px;top:689.00px;font-size:12.71px;line-height:15px;color:#2b2b2b;letter-spacing:-0.132px;">Delegiert an Gruppe</div>
<div class="a" style="left:900px;top:710px;width:83px;height:22px;background:#fff;border:1px dashed #ababab;border-right:1px solid #d2d2d2;"></div>
<div class="a" style="left:983px;top:710px;width:24px;height:22px;border-top:1px dashed #ababab;border-bottom:1px dashed #ababab;"></div>
<svg class="a" style="left:988px;top:715px" width="12" height="12" viewBox="0 0 12 12"><circle cx="7.6" cy="4.3" r="3.4" fill="none" stroke="#2f4ba0" stroke-width="1.4"/><line x1="5.2" y1="6.8" x2="1.5" y2="10.5" stroke="#2f4ba0" stroke-width="2.1" stroke-linecap="round"/></svg>
<div class="a" style="left:1007px;top:710px;width:206px;height:22px;background:#fff;border:1px dashed #ababab;border-left:1px solid #d2d2d2;"></div>
<div class="a" style="left:886px;top:749px;width:342px;height:1px;background:#c4c4c4"></div>
<div class="a" style="left:886px;top:750px;width:342px;height:13px;border:1px dashed #ababab;background:#f5f5f5;border-top:none"></div>
<div class="a" style="left:26px;top:765px;width:1202px;height:23px;border:1px dashed #ababab;background:#f5f5f5"></div>
<div class="a" style="left:1232px;top:137px;width:387px;height:780px;background:#fcfcfc;border-left:1px solid #c6c6c6"></div>
<div class="a" style="left:1239px;top:142px;width:357px;height:26px;background:#fff;border:1px solid #cdcdcd;border-radius:13px"></div>
<div class="a t" style="left:1253.4px;top:148.00px;font-size:12.94px;line-height:15px;color:#858585;letter-spacing:-0.027px;">Felder filtern …</div>
<div class="a" style="left:1233px;top:173px;width:368px;height:37px;background:#e5e5e5"></div>
<svg class="a" style="left:1252px;top:189px" width="10" height="6" viewBox="0 0 10 6"><polygon points="0.5,0.5 9.5,0.5 5,5.5" fill="#111"/></svg>
<div class="a t" style="left:1271.9px;top:184.00px;font-size:14.00px;line-height:16px;color:#111;letter-spacing:0.813px;">Allgemein</div>
<div class="a" style="left:1239px;top:216px;width:356px;height:30px;border:1px solid #c8c8c8;background:#fcfcfc"></div>
<svg class="a" style="left:1248px;top:223px" width="16" height="16" viewBox="0 0 16 16"><rect x="0.5" y="0.5" width="6" height="15" fill="none" stroke="#64b5f6"/><rect x="9.5" y="0.5" width="6" height="15" fill="none" stroke="#64b5f6"/></svg>
<div class="a t" style="left:1271.9px;top:225.00px;font-size:12.62px;line-height:14px;color:#111;letter-spacing:-0.172px;">2 Spalten</div>
<div class="a" style="left:1239px;top:252px;width:356px;height:30px;border:1px solid #c8c8c8;background:#fcfcfc"></div>
<svg class="a" style="left:1248px;top:259px" width="16" height="16" viewBox="0 0 16 16"><rect x="0.5" y="0.5" width="15" height="15" fill="none" stroke="#64b5f6"/><line x1="5.5" y1="0" x2="5.5" y2="16" stroke="#64b5f6"/><line x1="10.5" y1="0" x2="10.5" y2="16" stroke="#64b5f6"/></svg>
<div class="a t" style="left:1271.9px;top:261.00px;font-size:12.62px;line-height:14px;color:#111;letter-spacing:-0.172px;">3 Spalten</div>
<div class="a" style="left:1239px;top:288px;width:356px;height:30px;border:1px solid #c8c8c8;background:#fcfcfc"></div>
<svg class="a" style="left:1248px;top:295px" width="16" height="16" viewBox="0 0 16 16"><rect x="0.5" y="0.5" width="15" height="15" fill="none" stroke="#64b5f6"/><line x1="4.5" y1="0" x2="4.5" y2="16" stroke="#64b5f6"/><line x1="8" y1="0" x2="8" y2="16" stroke="#64b5f6"/><line x1="11.5" y1="0" x2="11.5" y2="16" stroke="#64b5f6"/></svg>
<div class="a t" style="left:1271.9px;top:297.00px;font-size:12.62px;line-height:14px;color:#111;letter-spacing:-0.172px;">4 Spalten</div>
<div class="a" style="left:1239px;top:324px;width:356px;height:30px;border:1px solid #c8c8c8;background:#fcfcfc"></div>
<svg class="a" style="left:1248px;top:331px" width="16" height="16" viewBox="0 0 16 16"><rect x="0.5" y="0.5" width="15" height="15" fill="#fff" stroke="#64b5f6"/><circle cx="8" cy="8" r="5" fill="#4285f4"/><path d="M8,8 L8,3 A5,5 0 0 1 13,8 Z" fill="#e67c23"/><path d="M8,8 L13,8 A5,5 0 0 1 11.5,11.5 Z" fill="#f4c20d"/></svg>
<div class="a t" style="left:1271.9px;top:333.00px;font-size:12.68px;line-height:14px;color:#111;letter-spacing:-0.166px;">Auswertung</div>
<div class="a" style="left:1239px;top:360px;width:356px;height:30px;border:1px solid #c8c8c8;background:#fcfcfc"></div>
<svg class="a" style="left:1248px;top:367px" width="16" height="16" viewBox="0 0 16 16"><rect x="0.5" y="0.5" width="15" height="15" fill="none" stroke="#64b5f6" stroke-dasharray="1,1.2"/></svg>
<div class="a t" style="left:1271.9px;top:369.00px;font-size:12.59px;line-height:14px;color:#111;letter-spacing:-0.231px;">Box</div>
<div class="a" style="left:1239px;top:396px;width:356px;height:30px;border:1px solid #c8c8c8;background:#fcfcfc"></div>
<svg class="a" style="left:1248px;top:403px" width="16" height="16" viewBox="0 0 16 16"><rect x="0.5" y="0.5" width="15" height="15" fill="#fff" stroke="#64b5f6"/><text x="8" y="11" font-family="Liberation Sans" font-size="7.5" font-weight="700" fill="#3949ab" text-anchor="middle">OK</text></svg>
<div class="a t" style="left:1271.9px;top:404.00px;font-size:12.86px;line-height:15px;color:#111;letter-spacing:-0.066px;">Button</div>
<div class="a" style="left:1239px;top:432px;width:356px;height:30px;border:1px solid #c8c8c8;background:#fcfcfc"></div>
<svg class="a" style="left:1248px;top:439px" width="16" height="16" viewBox="0 0 16 16"><rect x="0.5" y="0.5" width="15" height="15" fill="#fff" stroke="#64b5f6"/><rect x="1" y="1" width="14" height="5.2" fill="#1a6fd0"/><polygon points="9.3,2.3 13.8,2.3 11.55,4.9" fill="#fff"/><path d="M6.5,14.6 L6.5,8.6 M5,10.2 L6.5,8.5 L8,10.2" stroke="#3444b0" stroke-width="1.2" fill="none"/><path d="M10.5,8.5 L10.5,14.4 M9,12.9 L10.5,14.5 L12,12.9" stroke="#3444b0" stroke-width="1.2" fill="none"/></svg>
<div class="a t" style="left:1271.9px;top:440.00px;font-size:12.75px;line-height:15px;color:#111;letter-spacing:-0.108px;">Collapsible</div>
<div class="a" style="left:1239px;top:468px;width:356px;height:30px;border:1px solid #c8c8c8;background:#fcfcfc"></div>
<svg class="a" style="left:1248px;top:475px" width="16" height="16" viewBox="0 0 16 16"><rect x="0.5" y="0.5" width="15" height="15" fill="none" stroke="#64b5f6" stroke-dasharray="1,1.2"/><rect x="2.5" y="3.5" width="2" height="1.2" fill="#555"/><rect x="2.5" y="7.5" width="2" height="1.2" fill="#555"/><rect x="2.5" y="11.5" width="2" height="1.2" fill="#555"/><rect x="7" y="3" width="6" height="2.3" rx="0.6" fill="none" stroke="#1e6fd6" stroke-width="1"/><rect x="7" y="7" width="6" height="2.3" rx="0.6" fill="none" stroke="#1e6fd6" stroke-width="1"/><rect x="7" y="11" width="6" height="2.3" rx="0.6" fill="none" stroke="#1e6fd6" stroke-width="1"/></svg>
<div class="a t" style="left:1271.9px;top:477.00px;font-size:12.61px;line-height:14px;color:#111;letter-spacing:-0.191px;">Feldgruppe</div>
<div class="a" style="left:1239px;top:504px;width:356px;height:30px;border:1px solid #c8c8c8;background:#fcfcfc"></div>
<svg class="a" style="left:1248px;top:511px" width="16" height="16" viewBox="0 0 16 16"><rect x="0.5" y="0.5" width="15" height="15" fill="#fff" stroke="#64b5f6"/><rect x="2.8" y="4" width="1.2" height="3.5" fill="#7e57c2"/><rect x="4" y="5" width="1.2" height="2.5" fill="#ef6c00"/><rect x="5.2" y="3" width="1.2" height="4.5" fill="#d4e157"/><path d="M8.8,4 Q10,3 11,4 Q12,5 13.5,3.8 M8.8,5.8 Q10,4.8 11,5.8 Q12,6.8 13.5,5.6 M8.8,7.3 L13,7.3" stroke="#2e7d32" stroke-width="0.9" fill="none" opacity="0.85"/><path d="M5,8.8 A2.6,2.6 0 1 0 7.2,11.4 L5,11.4 Z" fill="#8ec5fb"/><path d="M9.5,9.5 L13,9.5 M11.25,9.5 L11.25,13.5" stroke="#2e8b57" stroke-width="1.3"/></svg>
<div class="a t" style="left:1271.9px;top:512.00px;font-size:13.00px;line-height:15px;color:#111;letter-spacing:0.185px;">Infoboard</div>
<div class="a" style="left:1239px;top:540px;width:356px;height:30px;border:1px solid #c8c8c8;background:#fcfcfc"></div>
<svg class="a" style="left:1248px;top:547px" width="16" height="16" viewBox="0 0 16 16"><path d="M0.5,15.5 L0.5,0.5 L15.5,0.5" fill="none" stroke="#64b5f6" stroke-dasharray="1,1.2"/><path d="M15,0 L15,15 L0,15" fill="none" stroke="#64b5f6" stroke-width="2"/></svg>
<div class="a t" style="left:1271.9px;top:549.00px;font-size:12.56px;line-height:14px;color:#111;letter-spacing:-0.204px;">Karte</div>
<div class="a" style="left:1239px;top:576px;width:356px;height:30px;border:1px solid #c8c8c8;background:#fcfcfc"></div>
<svg class="a" style="left:1248px;top:583px" width="16" height="16" viewBox="0 0 16 16"><rect x="0.5" y="0.5" width="15" height="15" fill="#fff" stroke="#64b5f6"/><rect x="2.5" y="2.5" width="11" height="1.5" fill="#3949ab"/><text x="8" y="14" font-family="Liberation Sans" font-size="10" font-weight="700" fill="#3949ab" text-anchor="middle">A</text></svg>
<div class="a t" style="left:1271.9px;top:585.00px;font-size:12.56px;line-height:14px;color:#111;letter-spacing:-0.208px;">Label</div>
<div class="a" style="left:1239px;top:612px;width:356px;height:30px;border:1px solid #c8c8c8;background:#fcfcfc"></div>
<svg class="a" style="left:1248px;top:619px" width="16" height="16" viewBox="0 0 16 16"><rect x="0.5" y="2.5" width="15" height="13" fill="#fff" stroke="#64b5f6"/><rect x="0" y="0" width="9" height="2.5" fill="#1e6fd6"/></svg>
<div class="a t" style="left:1271.9px;top:620.00px;font-size:12.95px;line-height:15px;color:#111;letter-spacing:-0.028px;">Tab</div>
<div class="a" style="left:1239px;top:648px;width:356px;height:30px;border:1px solid #c8c8c8;background:#fcfcfc"></div>
<svg class="a" style="left:1248px;top:655px" width="16" height="16" viewBox="0 0 16 16"><rect x="0.5" y="2.5" width="15" height="13" fill="#fff" stroke="#64b5f6"/><rect x="0" y="0" width="12" height="2.5" fill="#1e6fd6"/><rect x="3.8" y="0.6" width="0.6" height="1.4" fill="#fff"/><rect x="7.8" y="0.6" width="0.6" height="1.4" fill="#fff"/></svg>
<div class="a t" style="left:1271.9px;top:656.00px;font-size:12.86px;line-height:15px;color:#111;letter-spacing:-0.075px;">Tabgruppe</div>
<div class="a" style="left:1239px;top:684px;width:356px;height:30px;border:1px solid #c8c8c8;background:#fcfcfc"></div>
<svg class="a" style="left:1248px;top:691px" width="16" height="16" viewBox="0 0 16 16"><rect x="0.5" y="0.5" width="15" height="15" fill="#fff" stroke="#64b5f6"/><circle cx="8" cy="8" r="5.8" fill="#5aaaf0"/><path d="M2.4,5.3 L4,4.2 L5.6,5.3 L7.2,4.2 L8.8,5.3 L10.4,4.2 L12,5.3 L13.6,4.2 M2.4,10.7 L4,11.8 L5.6,10.7 L7.2,11.8 L8.8,10.7 L10.4,11.8 L12,10.7 L13.6,11.8" stroke="#fff" stroke-width="0.9" fill="none"/><rect x="6.6" y="3.3" width="2.8" height="1.2" fill="#fff"/><rect x="6.6" y="11.5" width="2.8" height="1.2" fill="#fff"/><path d="M2.2,7.4 L4,8.8 L5.8,7.4 L7.6,8.8 L9.4,7.4 L11.2,8.8 L13,7.4" stroke="#4a4fb8" stroke-width="1.8" fill="none"/></svg>
<div class="a t" style="left:1271.9px;top:693.00px;font-size:12.70px;line-height:14px;color:#111;letter-spacing:-0.171px;">Webview</div>
<div class="a" style="left:1233px;top:720px;width:368px;height:37px;background:#e5e5e5"></div>
<svg class="a" style="left:1252px;top:736px" width="10" height="6" viewBox="0 0 10 6"><polygon points="0.5,0.5 9.5,0.5 5,5.5" fill="#111"/></svg>
<div class="a t" style="left:1271.9px;top:731.00px;font-size:14.00px;line-height:16px;color:#111;letter-spacing:0.900px;">Felder</div>
<div class="a" style="left:1239px;top:763px;width:356px;height:30px;border:1px solid #c8c8c8;background:#fcfcfc"></div>
<svg class="a" style="left:1249px;top:770px" width="16" height="16" viewBox="0 0 16 16"><circle cx="8.3" cy="5" r="3.6" fill="none" stroke="#3949ab" stroke-width="1.3"/><line x1="5.6" y1="8" x2="2" y2="11.8" stroke="#3949ab" stroke-width="1.3"/><path d="M6,11.3 L12.5,11.3" stroke="#3949ab" stroke-width="1.1" stroke-dasharray="1,0.6"/></svg>
<div class="a t" style="left:1272.2px;top:771.00px;font-size:12.75px;line-height:15px;color:#111;letter-spacing:-0.130px;">Angebot</div>
<div class="a t" style="left:1321.9px;top:773.00px;font-size:10.93px;line-height:12px;color:#111;letter-spacing:-0.029px;">(DefaultQuote.Activity)</div>
<div class="a" style="left:1239px;top:799px;width:356px;height:30px;border:1px solid #c8c8c8;background:#fcfcfc"></div>
<svg class="a" style="left:1249px;top:806px" width="16" height="16" viewBox="0 0 16 16"><circle cx="8.3" cy="5" r="3.6" fill="none" stroke="#3949ab" stroke-width="1.3"/><line x1="5.6" y1="8" x2="2" y2="11.8" stroke="#3949ab" stroke-width="1.3"/><path d="M6,11.3 L12.5,11.3" stroke="#3949ab" stroke-width="1.1" stroke-dasharray="1,0.6"/></svg>
<div class="a t" style="left:1272.2px;top:808.00px;font-size:12.43px;line-height:14px;color:#111;letter-spacing:-0.284px;">Anlage</div>
<div class="a t" style="left:1313.2px;top:809.00px;font-size:10.94px;line-height:12px;color:#111;letter-spacing:-0.023px;">(DefaultInstallation.Activity)</div>
<div class="a" style="left:1239px;top:835px;width:356px;height:30px;border:1px solid #c8c8c8;background:#fcfcfc"></div>
<svg class="a" style="left:1248px;top:842px" width="16" height="16" viewBox="0 0 16 16"><rect x="1.5" y="2.5" width="13" height="12" rx="1.5" fill="#eceff1" stroke="#90a4ae" stroke-width="1"/><rect x="1.5" y="2" width="13" height="3.3" fill="#42a5f5"/><rect x="4" y="0.7" width="1.2" height="2.5" fill="#1e88e5"/><rect x="10.8" y="0.7" width="1.2" height="2.5" fill="#1e88e5"/><text x="8" y="13.2" font-family="Liberation Sans" font-size="7.5" font-weight="700" fill="#1e63b8" text-anchor="middle">31</text></svg>
<div class="a t" style="left:1272.2px;top:844.00px;font-size:12.68px;line-height:14px;color:#111;letter-spacing:-0.167px;">Anlagedatum</div>
<div class="a t" style="left:1349.2px;top:845.00px;font-size:10.70px;line-height:12px;color:#111;letter-spacing:-0.129px;">(CreateDate.Activity)</div>
<div class="a" style="left:1239px;top:871px;width:356px;height:30px;border:1px solid #c8c8c8;background:#fcfcfc"></div>
<svg class="a" style="left:1248px;top:878px" width="16" height="16" viewBox="0 0 16 16"><rect x="2.5" y="4" width="13" height="8" fill="#90caf9"/><text x="9.5" y="10.8" font-family="Liberation Sans" font-size="7.5" font-weight="700" fill="#3949ab" text-anchor="middle">ab</text><path d="M1,1 L5,1 M3,1 L3,15 M1,15 L5,15" stroke="#3949ab" stroke-width="1.1"/></svg>
<div class="a t" style="left:1272.2px;top:880.00px;font-size:12.65px;line-height:14px;color:#111;letter-spacing:-0.172px;">Anlageuser</div>
<div class="a t" style="left:1338.2px;top:881.00px;font-size:10.68px;line-height:12px;color:#111;letter-spacing:-0.137px;">(CreateUser.Activity)</div>
<div class="a" style="left:1239px;top:907px;width:356px;height:10px;border:1px solid #c8c8c8;background:#fcfcfc;border-bottom:none"></div>
<div class="a" style="left:1606px;top:142px;width:8px;height:775px;background:#e6e6e6;border-radius:4px 4px 0 0"></div>
<div class="a" style="left:1606px;top:142px;width:8px;height:196px;background:#bdbdbd;border-radius:4px"></div>
<div class="a" style="left:1619px;top:104px;width:16px;height:813px;background:#f5f5f5"></div>
<div class="a" style="left:1624px;top:109px;width:8px;height:804px;background:#e6e6e6;border-radius:4px"></div>
<div class="a" style="left:1624px;top:109px;width:8px;height:561px;background:#bdbdbd;border-radius:4px"></div>
<svg class="a" style="left:1472px;top:918px" width="14" height="4" viewBox="0 0 14 4"><circle cx="7" cy="7" r="4.4" fill="none" stroke="#333" stroke-width="1.2"/></svg>
</body></html>
